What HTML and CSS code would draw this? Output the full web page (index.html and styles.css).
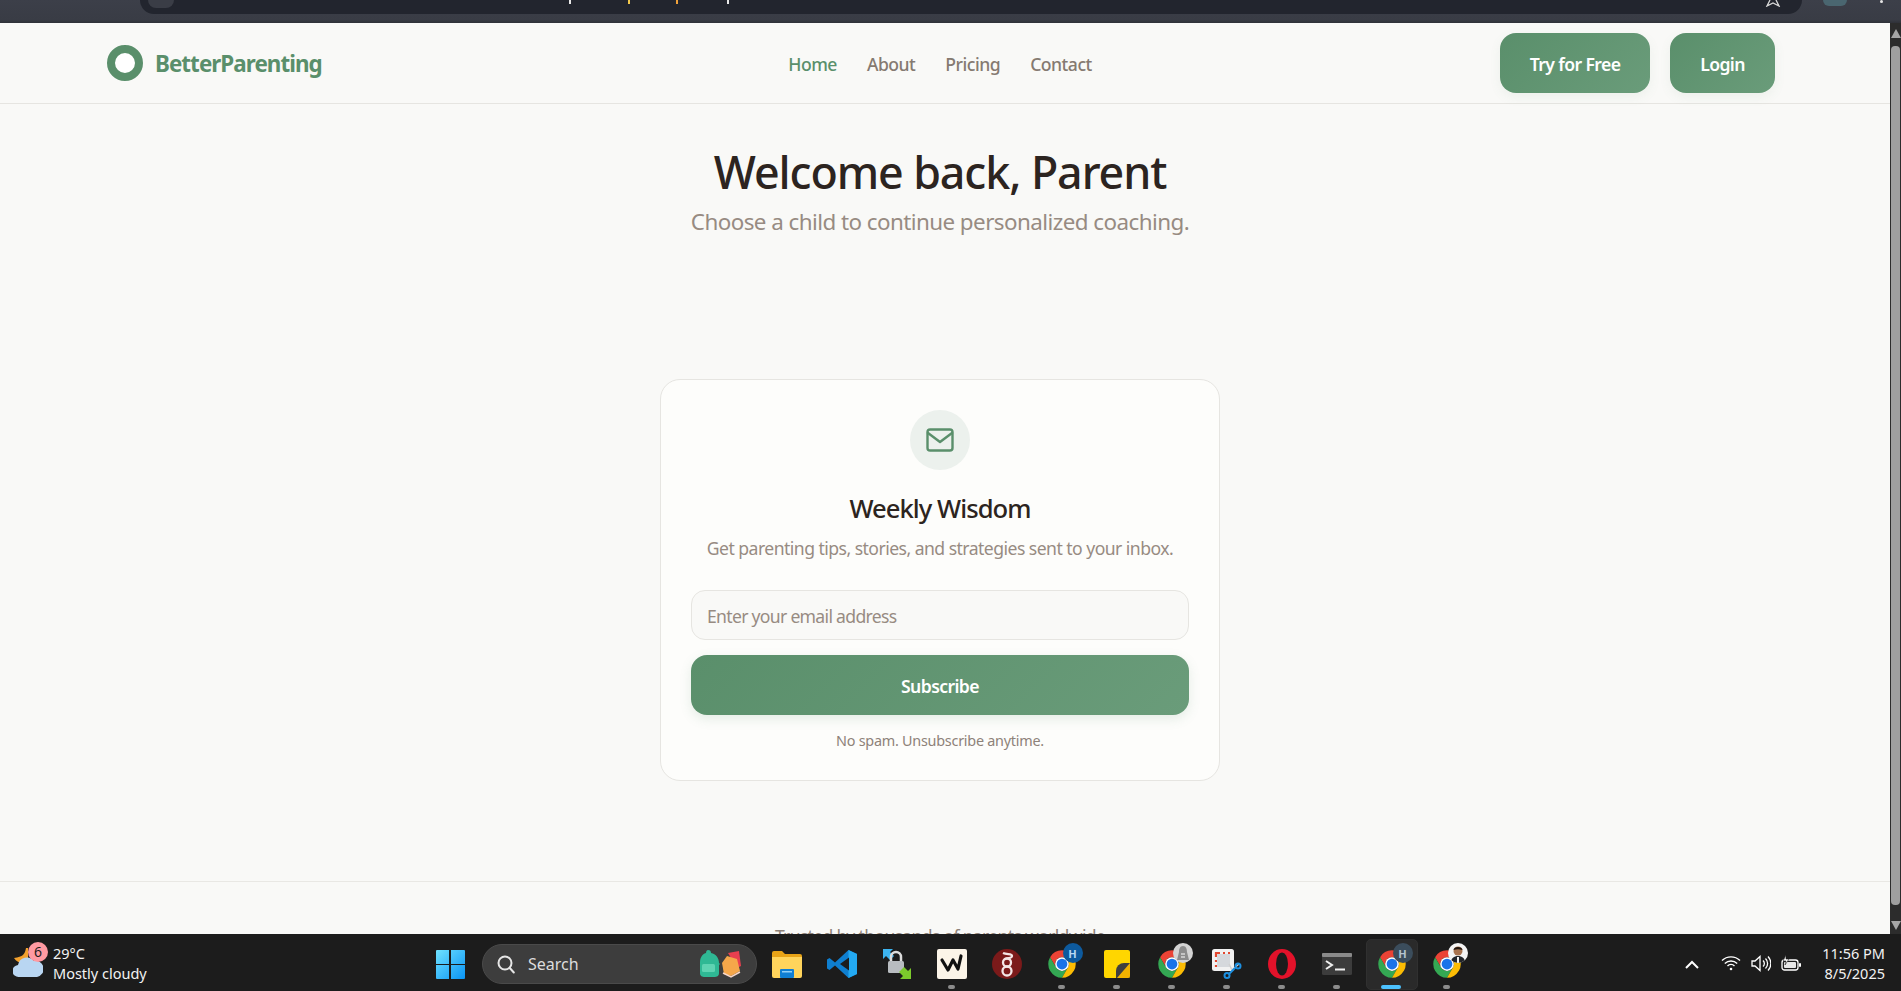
FILE: index.html
```html
<!DOCTYPE html>
<html lang="en">
<head>
<meta charset="utf-8">
<title>BetterParenting</title>
<link rel="stylesheet" href="styles.css">
</head>
<body>
<svg class="defs" width="0" height="0" aria-hidden="true">
  <symbol id="chrome" viewBox="0 0 48 48">
    <path fill="#ea4335" d="M24 2A22 22 0 0 0 4.95 13L14.5 29.5A11 11 0 0 1 24 13H43.05A22 22 0 0 0 24 2Z"/>
    <path fill="#34a853" d="M4.95 13A22 22 0 0 0 24 46L33.5 29.5A11 11 0 0 1 14.5 29.5Z"/>
    <path fill="#fbbc04" d="M24 13H43.05A22 22 0 0 1 24 46L33.5 29.5A11 11 0 0 0 24 13Z"/>
    <circle cx="24" cy="24" r="11" fill="#fff"/>
    <circle cx="24" cy="24" r="8.6" fill="#1a73e8"/>
  </symbol>
</svg>

<div class="browser-bar">
  <div class="address">
    <span class="addr-btn"></span>
    <span class="addr-marks"><i class="mark m1"></i><i class="mark m2"></i><i class="mark m3"></i><i class="mark m4"></i></span>
    <svg class="addr-star" width="16" height="7" viewBox="0 0 16 7"><path d="M5 0L2 6l6-3 6 3-3-6" fill="none" stroke="#d8d8d8" stroke-width="1.300"/></svg>
  </div>
  <span class="avatar"></span>
  <span class="menu-dot"></span>
</div>

<div class="viewport">
  <div class="page">
    <header class="site-header">
      <a class="brand"><span class="brand-ring"></span><span class="brand-name">BetterParenting</span></a>
      <nav class="nav">
        <a class="nav-link nav-active">Home</a>
        <a class="nav-link">About</a>
        <a class="nav-link">Pricing</a>
        <a class="nav-link">Contact</a>
      </nav>
      <div class="actions">
        <a class="btn btn-try">Try for Free</a>
        <a class="btn btn-login">Login</a>
      </div>
    </header>

    <main class="main">
      <h1 class="title">Welcome back, Parent</h1>
      <p class="subtitle">Choose a child to continue personalized coaching.</p>

      <section class="card">
        <span class="mail-badge">
          <svg width="28" height="24" viewBox="0 0 28 24" fill="none" stroke="#5a8f6b" stroke-width="2.4" stroke-linecap="round" stroke-linejoin="round"><rect x="1.5" y="1.5" width="25" height="21" rx="2.6"/><path d="M2 5l12 9 12-9"/></svg>
        </span>
        <h2 class="card-title">Weekly Wisdom</h2>
        <p class="card-text">Get parenting tips, stories, and strategies sent to your inbox.</p>
        <input class="email" type="text" placeholder="Enter your email address">
        <button class="subscribe" type="button">Subscribe</button>
        <p class="fineprint">No spam. Unsubscribe anytime.</p>
      </section>
    </main>

    <footer class="site-footer">
      <p class="trusted">Trusted by thousands of parents worldwide</p>
    </footer>
  </div>
  <div class="scrollbar">
    <span class="arrow arrow-up"></span>
    <span class="thumb"></span>
    <span class="arrow arrow-down"></span>
  </div>
</div>

<div class="taskbar">
  <div class="weather">
    <span class="weather-icon">
      <svg width="30" height="36" viewBox="0 0 30 36">
        <path d="M13 6C12 12 10 15 1 16c3 5 9 6 14 4V6z" fill="#f2a12e"/>
        <path d="M6 35a6 6 0 0 1-1-12 9 9 0 0 1 16-4 8 8 0 0 1 3 16z" fill="#b9d6f2"/>
      </svg>
      <span class="weather-count">6</span>
    </span>
    <span class="weather-text"><span>29°C</span><span>Mostly cloudy</span></span>
  </div>

  <svg class="start" width="29" height="29" viewBox="0 0 29 29">
    <defs><linearGradient id="win" x1="0" y1="0" x2="1" y2="1"><stop offset="0" stop-color="#6fe2ff"/><stop offset="1" stop-color="#0a94f5"/></linearGradient></defs>
    <path fill="url(#win)" d="M0 1a1 1 0 0 1 1-1h12v14H0zM15 0h13a1 1 0 0 1 1 1v13H15zM0 15h13v14H1a1 1 0 0 1-1-1zM15 15h14v13a1 1 0 0 1-1 1H15z"/>
  </svg>

  <div class="search">
    <svg class="search-glass" width="18" height="19" viewBox="0 0 18 19" fill="none" stroke="#e6e6e6" stroke-width="2" stroke-linecap="round"><circle cx="8" cy="8" r="6.500"/><path d="M12.800 13l4 4.500"/></svg>
    <span class="search-label">Search</span>
    <svg class="search-art" width="44" height="28" viewBox="0 0 44 28">
      <path d="M10 0c2 0 3 1 3 3 5 1 8 5 8 10l1 1-1 1v8c0 3-2 4-5 4H7c-3 0-5-1-5-4V12C2 8 4 4 8 3c0-2 1-3 2-3z" fill="#2fb894"/>
      <rect x="4" y="14" width="13" height="8" rx="1.500" fill="#5fd3b2"/>
      <path d="M30 3l11-2 2 15-4 2z" fill="#e8404f"/>
      <path d="M29 6l10 3 3 12-9 5-7-2-2-11z" fill="#f5a74a"/>
      <path d="M25 23l8 4 9-5" fill="none" stroke="#f8d7c8" stroke-width="1.500"/>
    </svg>
  </div>

  <div class="apps">
    <div class="app no-dot">
      <svg class="ico" width="30" height="28" viewBox="0 0 30 28"><path d="M0 3a2 2 0 0 1 2-2h8l3 3h15a2 2 0 0 1 2 2v6H0z" fill="#e8a317"/><path d="M0 7h30v19a2 2 0 0 1-2 2H2a2 2 0 0 1-2-2z" fill="#ffd45c"/><rect x="8" y="19" width="14" height="9" rx="1" fill="#0f7fd4"/><rect x="10" y="21" width="10" height="1.500" fill="#8fd0f8"/></svg>
    </div>
    <div class="app no-dot">
      <svg class="ico" width="30" height="30" viewBox="0 0 30 30"><path d="M21.500 1L30 5v20l-8.500 4L8 16.500 2.500 21 0 19.500v-9L2.500 9 8 13.500z" fill="#0f7fd0"/><path d="M21.500 1L30 5v20l-8.500 4z" fill="#23a9f2"/><path d="M22 8.500v13L13 15z" fill="#1c1c1c"/></svg>
    </div>
    <div class="app no-dot">
      <svg class="ico" width="30" height="30" viewBox="0 0 30 30"><path d="M1 0h10L8 3l4 4-4 4-4-4-3 3z" fill="#3cb4f0"/><rect x="6" y="12" width="16" height="12" rx="1.500" fill="#b8bcc0"/><path d="M9 12V8a5 5 0 0 1 10 0v4" fill="none" stroke="#dcdcdc" stroke-width="2.500"/><path d="M29 30H18l3-3-4-4 5-5 4 4 3-3z" fill="#7ccb2c"/></svg>
    </div>
    <div class="app">
      <svg class="ico" width="30" height="30" viewBox="0 0 30 30"><rect width="30" height="30" rx="2" fill="#fbf4e8"/><path d="M5 11l6 10 5-10 5 9 3-13" fill="none" stroke="#111" stroke-width="3.200" stroke-linecap="round" stroke-linejoin="round"/></svg>
    </div>
    <div class="app no-dot">
      <svg class="ico" width="30" height="30" viewBox="0 0 30 30"><circle cx="15" cy="15" r="15" fill="#7b1a1a"/><g fill="none" stroke="#f4e6e6" stroke-width="2.300"><circle cx="15" cy="22" r="4.500"/><circle cx="15" cy="13.500" r="4"/><path d="M11 4c4 2 9 0 9 3s-7 2-7 3"/></g></svg>
    </div>
    <div class="app">
      <span class="ico-wrap"><svg class="ico" width="30" height="30"><use href="#chrome"/></svg><span class="badge badge-blue">H</span></span>
    </div>
    <div class="app">
      <svg class="ico" width="26" height="28" viewBox="0 0 26 28"><rect width="26" height="28" rx="2" fill="#ffd600"/><path d="M26 13v13a2 2 0 0 1-2 2H12v-7a8 8 0 0 1 8-8z" fill="#3f3f3f"/><path d="M26 13v13a2 2 0 0 1-2 2H13z" fill="#f2b200"/></svg>
    </div>
    <div class="app">
      <span class="ico-wrap"><svg class="ico" width="30" height="30"><use href="#chrome"/></svg>
        <span class="badge badge-stamp"><svg width="14" height="16" viewBox="0 0 14 16"><path d="M7 1c3 0 4 3 4 6l2 8H1l2-8c0-3 1-6 4-6z" fill="#8c8c8c"/><path d="M5 9h4M5 12h4" stroke="#d8d8d8" stroke-width="1.300"/></svg></span></span>
    </div>
    <div class="app">
      <svg class="ico" width="30" height="30" viewBox="0 0 30 30"><rect width="22" height="22" rx="2.500" fill="#f1f1f1"/><path d="M4 8V4h4M11 4h2M16 4h2" fill="none" stroke="#e2472f" stroke-width="2.200"/><path d="M4 11v2M4 16v2" stroke="#e2472f" stroke-width="2.200"/><rect x="5" y="5" width="13" height="13" fill="#d5d8dc"/><path d="M17 15l3 6M27 15l-7 6" stroke="#d0d0d0" stroke-width="1.500"/><g fill="none" stroke="#1c8fe0" stroke-width="2"><circle cx="26" cy="17" r="2.500"/><circle cx="15" cy="26.500" r="2.500"/><path d="M17 25l6-6"/></g></svg>
    </div>
    <div class="app">
      <svg class="ico" width="28" height="30" viewBox="0 0 28 30"><ellipse cx="14" cy="15" rx="14" ry="15" fill="#e3122a"/><ellipse cx="14" cy="15" rx="6" ry="11.500" fill="#1c1c1c"/></svg>
    </div>
    <div class="app">
      <svg class="ico" width="30" height="22" viewBox="0 0 30 22"><rect width="30" height="22" rx="1.500" fill="#3c3c3c"/><rect width="30" height="4" rx="1" fill="#8a8a8a"/><path d="M4 8l6 4-6 4" fill="none" stroke="#f0f0f0" stroke-width="2"/><rect x="13" y="15.500" width="10" height="2" fill="#f0f0f0"/></svg>
    </div>
    <div class="app app-active">
      <span class="ico-wrap"><svg class="ico" width="30" height="30"><use href="#chrome"/></svg><span class="badge badge-slate">H</span></span>
    </div>
    <div class="app">
      <span class="ico-wrap"><svg class="ico" width="30" height="30"><use href="#chrome"/></svg>
        <span class="badge badge-person"><svg width="20" height="20" viewBox="0 0 20 20"><path d="M3 20c0-5 3-7 7-7s7 2 7 7z" fill="#23262b"/><circle cx="10" cy="8" r="4.500" fill="#a9744f"/><path d="M5.500 7c0-4 9-4 9 0-3-1-6-1-9 0z" fill="#20140d"/><path d="M9 14h2v6H9z" fill="#f2f2f2"/></svg></span></span>
    </div>
  </div>

  <div class="tray">
    <svg class="chev" width="14" height="9" viewBox="0 0 14 9"><path d="M1 8l6-6 6 6" fill="none" stroke="#fff" stroke-width="2"/></svg>
    <svg width="20" height="16" viewBox="0 0 20 16" fill="none" stroke="#fff" stroke-width="1.400"><path d="M1 5.500a13 13 0 0 1 18 0M3.800 8.500a9 9 0 0 1 12.400 0M6.500 11a5 5 0 0 1 7 0"/><circle cx="10" cy="14" r="1.300" fill="#fff" stroke="none"/></svg>
    <svg width="20" height="17" viewBox="0 0 20 17" fill="none" stroke="#fff" stroke-width="1.300"><path d="M1 6h3l5-4.500v14L4 11H1zM12 5.500a4 4 0 0 1 0 6M14.500 3.500a7 7 0 0 1 0 10M17 1.500a10 10 0 0 1 0 14"/></svg>
    <svg width="20" height="17" viewBox="0 0 20 17"><rect x="1" y="5" width="16" height="10" rx="2.500" fill="none" stroke="#fff" stroke-width="1.300"/><rect x="3" y="7" width="12" height="6" rx="1" fill="#e8e8e8"/><rect x="18" y="8" width="2" height="4" rx="1" fill="#fff"/><path d="M5 0L2 6h3l-1 4 4-6H5z" fill="#fff" stroke="#1c1c1c" stroke-width=".6"/></svg>
    <span class="clock"><span>11:56 PM</span><span>8/5/2025</span></span>
  </div>
</div>
</body>
</html>
```

FILE: styles.css
```css
* { box-sizing: border-box; }
html, body { height: 100%; }
body {
  margin: 0;
  height: 100vh;
  display: flex;
  flex-direction: column;
  overflow: hidden;
  background: #f9f9f7;
  font-family: "Noto Sans", "Open Sans", sans-serif;
  color: #2c2420;
}
p, h1, h2 { margin: 0; }
.defs { position: absolute; }

/* browser chrome sliver */
.browser-bar {
  height: 23px;
  flex: none;
  display: flex;
  align-items: flex-start;
  background: linear-gradient(#3c3f49, #393c45 85%, #2f3138);
  padding-left: 140px;
  overflow: hidden;
}
.address {
  width: 1662px;
  height: 14px;
  background: #22252e;
  border-radius: 0 0 14px 14px;
  display: flex;
  align-items: flex-start;
  padding-left: 8px;
}
.addr-btn {
  width: 26px;
  height: 8px;
  background: #3a3d46;
  border-radius: 0 0 13px 13px;
  flex: none;
}
.addr-marks {
  margin-left: 395px;
  display: flex;
  flex: 1;
}
.mark { display: block; width: 2px; height: 4px; background: #e8e8e8; }
.m2 { margin-left: 57px; background: #f2c84b; }
.m3 { margin-left: 46px; background: #f0a23b; }
.m4 { margin-left: 49px; }
.addr-star { margin-right: 21px; }
.avatar {
  width: 24px;
  height: 6px;
  margin-left: 21px;
  background: #4a6670;
  border-radius: 0 0 12px 12px;
}
.menu-dot {
  width: 3px;
  height: 3px;
  margin-left: 33px;
  background: #e6e6e6;
  border-radius: 50%;
}

/* page viewport */
.viewport {
  flex: 1;
  min-height: 0;
  display: flex;
}
.page {
  flex: 1;
  min-width: 0;
  overflow: hidden;
}
.scrollbar {
  width: 11px;
  flex: none;
  background: #2c2c2c;
  display: flex;
  flex-direction: column;
  align-items: center;
  padding: 6px 0 4px;
}
.arrow { width: 0; height: 0; flex: none; border-left: 5px solid transparent; border-right: 5px solid transparent; }
.arrow-up { border-bottom: 9px solid #a6a6a6; }
.arrow-down { border-top: 9px solid #a6a6a6; }
.thumb {
  width: 9px;
  flex: 1;
  margin: 8px 0 16px;
  background: #9f9f9f;
  border-radius: 4px;
}

/* site header */
.site-header {
  height: 81px;
  border-bottom: 1px solid #e6e5e1;
  display: grid;
  grid-template-columns: 1fr auto 1fr;
  align-items: center;
  padding: 0 115px 1px 107px;
}
.brand { display: flex; align-items: center; gap: 12px; }
.brand-ring {
  width: 36px;
  height: 36px;
  flex: none;
  border: 8px solid #5a8f6b;
  border-radius: 50%;
  background: #fff;
}
.brand-name { padding-top: 2px; font-size: 22.4px; font-weight: 700; letter-spacing: -.95px; color: #5a8f6b; }
.nav { display: flex; gap: 30px; padding: 2px 2px 0 0; }
.nav-link { font-size: 17.6px; font-weight: 500; letter-spacing: -.5px; color: #857a71; }
.nav-active { color: #5a8f6b; }
.actions { display: flex; justify-content: flex-end; gap: 20px; }
.btn {
  height: 60px;
  border-radius: 16px;
  padding: 3px 0 0;
  display: flex;
  align-items: center;
  justify-content: center;
  font-size: 17.6px;
  font-weight: 600;
  letter-spacing: -.6px;
  color: #fff;
  background: linear-gradient(135deg, #5a8f6b, #6a9c7a);
  box-shadow: 0 4px 12px rgba(90, 143, 107, .08);
}
.btn-try { width: 150px; }
.btn-login { width: 105px; }

/* main column */
.main {
  display: flex;
  flex-direction: column;
  align-items: center;
  padding: 39px 10px 0 0;
}
.title { font-size: 44.8px; line-height: 58px; font-weight: 500; letter-spacing: -1.1px; }
.subtitle { margin-top: 5px; font-size: 22.4px; line-height: 32px; letter-spacing: -.55px; color: #978b82; }
.card {
  width: 560px;
  height: 402px;
  margin-top: 141px;
  padding: 30px;
  background: #fdfdfb;
  border: 1px solid #e6e5e1;
  border-radius: 20px;
  display: flex;
  flex-direction: column;
  align-items: center;
}
.mail-badge {
  width: 60px;
  height: 60px;
  flex: none;
  border-radius: 50%;
  background: #ecf1ed;
  display: flex;
  align-items: center;
  justify-content: center;
}
.card-title { margin-top: 22px; font-size: 25.6px; line-height: 34px; font-weight: 500; letter-spacing: -.95px; }
.card-text { margin-top: 9px; font-size: 17.6px; line-height: 26px; letter-spacing: -.54px; white-space: nowrap; color: #978b82; }
.email {
  width: 100%;
  height: 50px;
  flex: none;
  margin-top: 29px;
  padding: 2px 15px 0;
  background: #f9f9f7;
  border: 1px solid #e6e5e1;
  border-radius: 14px;
  font: 17.6px "Noto Sans", "Open Sans", sans-serif;
  letter-spacing: -.7px;
  color: #2c2420;
}
.email::placeholder { color: #978b82; opacity: 1; }
.subscribe {
  width: 100%;
  height: 60px;
  flex: none;
  margin-top: 15px;
  padding: 2px 0 0;
  border: 0;
  border-radius: 16px;
  background: linear-gradient(135deg, #5a8f6b, #6a9c7a);
  box-shadow: 0 4px 12px rgba(90, 143, 107, .15);
  font: 600 17.6px "Noto Sans", "Open Sans", sans-serif;
  letter-spacing: -.6px;
  color: #fff;
}
.fineprint { margin-top: 15px; font-size: 14.4px; line-height: 21px; letter-spacing: -.25px; color: #8e8279; }

/* footer */
.site-footer {
  margin-top: 100px;
  border-top: 1px solid #e9e8e4;
  padding: 42px 10px 0 0;
  text-align: center;
}
.trusted { font-size: 17.6px; line-height: 24px; letter-spacing: -.68px; color: #8e8279; }

/* windows taskbar */
.taskbar {
  height: 57px;
  flex: none;
  background: #1c1c1c;
  display: flex;
  align-items: flex-start;
  color: #f2f2f2;
  font-size: 14.5px;
  font-family: "Noto Sans", "Open Sans", sans-serif;
}
.weather {
  width: 436px;
  flex: none;
  padding: 8px 0 0 13px;
  display: flex;
  gap: 10px;
}
.weather-icon { position: relative; width: 30px; height: 36px; display: block; }
.weather-count {
  position: absolute;
  left: 15px;
  top: 0;
  width: 20px;
  height: 20px;
  border-radius: 50%;
  background: #ff9aa2;
  color: #1c1c1c;
  font-size: 14px;
  line-height: 20px;
  text-align: center;
}
.weather-text { display: flex; flex-direction: column; line-height: 20px; margin-top: 1px; }
.start { margin-top: 16px; flex: none; }
.search {
  width: 275px;
  height: 40px;
  margin: 10px 0 0 17px;
  flex: none;
  display: flex;
  align-items: center;
  background: #3d3d3d;
  border: 1px solid #4a4a4a;
  border-radius: 20px;
  padding: 0 14px 0 14px;
}
.search-label { margin-left: 13px; flex: 1; font-size: 16px; color: #dcdcdc; }
.apps { display: flex; margin-left: 2px; }
.app {
  width: 55px;
  height: 57px;
  position: relative;
  display: flex;
  justify-content: center;
  align-items: center;
  padding-top: 3px;
}
.app::after {
  content: "";
  position: absolute;
  left: 24px;
  top: 51px;
  width: 7px;
  height: 4px;
  border-radius: 2px;
  background: #8c8c8c;
}
.no-dot::after { display: none; }
.app-active::before {
  content: "";
  position: absolute;
  left: 2px;
  top: 5px;
  width: 50px;
  height: 49px;
  border-radius: 5px;
  background: #2a2a2a;
  border: 1px solid #303030;
}
.app-active::after { left: 17px; width: 20px; background: #4cc2ff; }
.ico { display: block; position: relative; }
.ico-wrap { position: relative; display: block; width: 30px; height: 30px; }
.badge {
  position: absolute;
  left: 16px;
  top: -6px;
  width: 20px;
  height: 20px;
  border-radius: 50%;
  display: flex;
  align-items: center;
  justify-content: center;
  font-size: 11px;
  font-weight: 700;
}
.badge-blue { background: #0d5a9e; color: #b8d8f4; }
.badge-slate { background: #3b4d5c; color: #b4c4d0; }
.badge-stamp { background: #d4d4d4; }
.badge-person { background: #f4f4f4; overflow: hidden; }
.tray {
  margin-left: auto;
  padding: 13px 16px 0 0;
  display: flex;
  align-items: flex-start;
  gap: 10px;
}
.tray svg { margin-top: 8px; }
.tray .chev { margin: 13px 12px 0 0; }
.clock {
  margin-left: 11px;
  display: flex;
  flex-direction: column;
  align-items: flex-end;
  line-height: 20px;
  margin-top: -4px;
}
```
